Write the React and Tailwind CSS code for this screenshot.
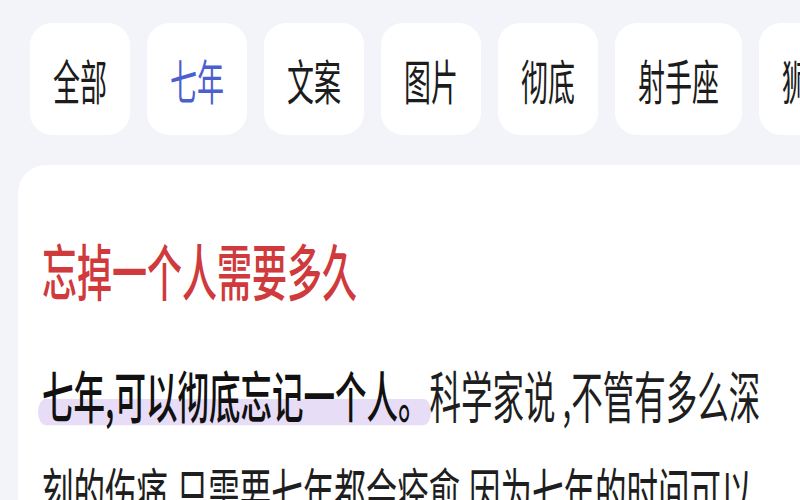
import React from 'react';

const tabs = ['全部', '七年', '文案', '图片', '彻底', '射手座', '狮子座'];

const Tall = ({ children, className = '' }) => (
    <span className={`inline-block scale-y-[1.75] ${className}`}>{children}</span>
);

const App = () => {
    return (
        <div className="h-[500px] w-[800px] overflow-hidden bg-[#f2f4f9] font-['Noto_Sans_CJK_SC',sans-serif]">
            {/* category tabs */}
            <div className="flex gap-[17px] pl-[30px] pt-[23px] whitespace-nowrap">
                {tabs.map((t) => (
                    <div
                        key={t}
                        className="flex h-[112px] shrink-0 items-center justify-center rounded-[22px] bg-white px-[23px]"
                    >
                        <Tall
                            className={`text-[27px] leading-none ${
                                t === '七年' ? 'text-[#4b5fd1]' : 'text-[#1c1c1c]'
                            }`}
                        >
                            {t}
                        </Tall>
                    </div>
                ))}
            </div>

            {/* article card */}
            <div className="ml-[18px] mt-[30px] h-[400px] w-[820px] rounded-[28px] bg-white pl-[24px] pt-[75px]">
                <div className="h-[60px] leading-[60px] whitespace-nowrap">
                    <Tall className="text-[35px] font-medium text-[#cf3a3c]">忘掉一个人需要多久</Tall>
                </div>

                <div className="mt-[46px] text-[31.5px] text-[#1e1e1e] whitespace-nowrap">
                    <div className="h-[97px] leading-[97px]">
                        <Tall>
                            <span className="relative font-medium text-[#111]">
                                <span className="absolute bottom-[5px] left-[-4px] right-[-2px] -z-10 h-[15px] rounded-full bg-[#e8ddf6]"></span>
                                七年,可以彻底忘记一个人。
                            </span>
                            科学家说 ,不管有多么深
                        </Tall>
                    </div>
                    <div className="h-[97px] leading-[97px]">
                        <Tall>刻的伤痛,只需要七年都会痊愈,因为七年的时间可以</Tall>
                    </div>
                </div>
            </div>
        </div>
    );
};

export default App;
